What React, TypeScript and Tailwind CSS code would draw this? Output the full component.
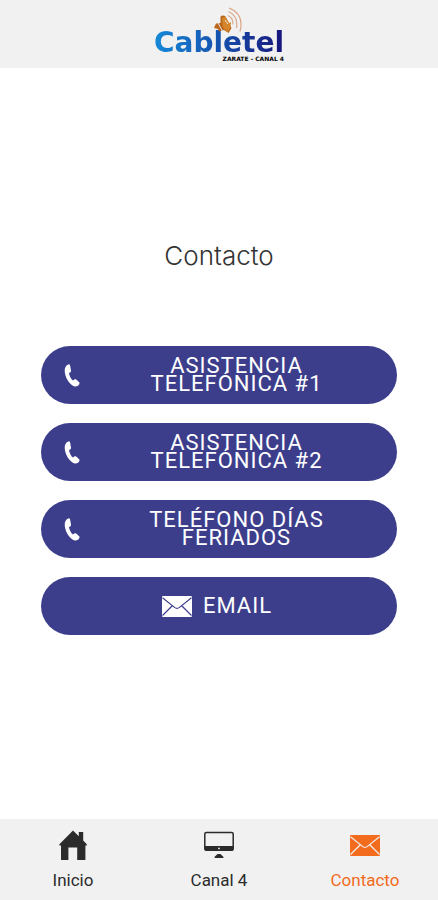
import type { ReactNode } from "react";

const actions = [
    { id: "asistencia-1", lines: ["ASISTENCIA", "TELEFÓNICA #1"] },
    { id: "asistencia-2", lines: ["ASISTENCIA", "TELEFÓNICA #2"] },
    { id: "feriados", lines: ["TELÉFONO DÍAS", "FERIADOS"] },
];

function PhoneIcon() {
    return (
        <svg viewBox="0 0 16 23" className="h-[23px] w-4 shrink-0" fill="currentColor" aria-hidden="true">
            <path d="M4.4 0.4 C2 1.2 0.7 3.4 0.7 6.4 C0.7 12.6 5 20.2 10 22.2 C12.4 23 15 21.6 15.5 19.4 C15.6 18.8 15.4 18.4 14.9 18 L12.2 15.6 C11.6 15.1 10.9 15.1 10.3 15.6 L9 16.6 C7 15 5.4 12 5 9 L6.2 8.4 C6.9 8 7.2 7.4 7 6.6 L6.1 1.4 C5.9 0.5 5.3 0.1 4.4 0.4 Z" />
        </svg>
    );
}

function MailIcon({ line }: { line: string }) {
    return (
        <svg viewBox="0 0 30 21" className="h-[21px] w-[30px] shrink-0" aria-hidden="true">
            <rect width="30" height="21" rx="1" fill="currentColor" />
            <path
                d="M0.5 1.8 L12.5 11.4 Q15 13.4 17.5 11.4 L29.5 1.8 M0.5 19.5 L10.3 9.8 M29.5 19.5 L19.7 9.8"
                fill="none"
                stroke={line}
                strokeWidth="1.2"
            />
        </svg>
    );
}

function HomeIcon() {
    return (
        <svg viewBox="0 0 28 30" className="h-[30px] w-7" fill="currentColor" aria-hidden="true">
            <path d="M14 0.6 L19.8 6.2 V2 H24.2 V10.6 L27.8 14.2 V15.6 H26.4 V30 H18.2 V17.4 H9.4 V30 H2 V15.6 H0.4 V14.2 Z" />
        </svg>
    );
}

function MonitorIcon() {
    return (
        <svg viewBox="0 0 30 30" className="size-[30px]" aria-hidden="true">
            <rect x="0.8" y="2.4" width="28.4" height="17.6" rx="1.6" fill="none" stroke="currentColor" strokeWidth="1.5" />
            <path d="M0.5 16 H29.5 V19.4 Q29.5 21 27.8 21 H2.2 Q0.5 21 0.5 19.4 Z" fill="currentColor" />
            <circle cx="15" cy="18.4" r="0.9" fill="#f1f1f1" />
            <path d="M13.6 24 H16.4 L19.4 26.8 V28 H10.6 V26.8 Z" fill="currentColor" />
        </svg>
    );
}

function DishIcon() {
    return (
        <svg viewBox="0 0 30 28" className="h-7 w-[30px]" aria-hidden="true">
            <path d="M7.5 9.5 Q10 7.5 12.5 9.5 L18.5 21 L15.5 26 L11 23 L6 24.5 L5 22 L1 21 L3 16.5 L7.5 16 Z" fill="#b8671c" />
            <path d="M9 11 L12.5 10 L16 16 L18 15 L17.5 20.5 L14.5 25 L10 20.5 Z" fill="#d5852a" />
            <path d="M4.5 15 L9.5 24 M12 13 L15 17" stroke="#f1f1f1" strokeWidth="0.9" />
            <path
                d="M15 8.5 Q20.5 11 19.8 17.5 M15.5 4.5 Q25.5 9 23.5 21 M16 1 Q31.5 7 27 24.5"
                fill="none"
                stroke="#dba988"
                strokeWidth="1.2"
            />
        </svg>
    );
}

function Logo() {
    return (
        <a href="#inicio" className="relative flex flex-col items-end font-['DejaVu_Sans',sans-serif] font-bold">
            <span className="bg-linear-to-r from-[#1589d8] via-[#1552ae] to-[#17127c] bg-clip-text pt-[2px] text-[28px] leading-[26px] text-transparent">
                Cabletel
            </span>
            <span className="text-[6px] leading-[6px] text-black">ZARATE - CANAL 4</span>
            <span className="absolute -top-[21px] left-[59px]">
                <DishIcon />
            </span>
        </a>
    );
}

function NavItem({ href, label, active, children }: { href: string; label: string; active?: boolean; children: ReactNode }) {
    return (
        <a
            href={href}
            aria-current={active ? "page" : undefined}
            className={`flex flex-1 flex-col items-center gap-2 ${active ? "text-[#f36b1c]" : "text-[#2b2b2b]"}`}
        >
            <span className="flex h-[30px] items-center">{children}</span>
            <span className="text-[17px] leading-6">{label}</span>
        </a>
    );
}

export default function App() {
    return (
        <div className="flex min-h-screen flex-col bg-white font-[Roboto,sans-serif]">
            <header className="flex items-start justify-center bg-[#f1f1f1] pt-[28px] pb-[6px]">
                <Logo />
            </header>

            <main className="flex flex-1 flex-col px-[41px] pt-[172px]">
                <h1 className="text-center font-[Inter,sans-serif] text-[26px] leading-8 font-light text-[#333333]">
                    Contacto
                </h1>

                <div className="mt-[74px] flex flex-col gap-[19px]">
                    {actions.map((action) => (
                        <button
                            key={action.id}
                            type="button"
                            className="flex h-[58px] items-center rounded-full bg-[#3c3e8c] pr-1 pl-[23px] text-[22px] leading-[18px] tracking-[1px] text-white"
                        >
                            <PhoneIcon />
                            <span className="flex-1">
                                {action.lines[0]}
                                <br />
                                {action.lines[1]}
                            </span>
                        </button>
                    ))}
                    <button
                        type="button"
                        className="flex h-[58px] items-center justify-center gap-[11px] rounded-full bg-[#3c3e8c] pr-1 text-[22px] leading-[18px] tracking-[1px] text-white"
                    >
                        <MailIcon line="#3c3e8c" />
                        EMAIL
                    </button>
                </div>
            </main>

            <nav className="flex bg-[#f1f1f1] pt-[11px] pb-2">
                <NavItem href="#inicio" label="Inicio">
                    <HomeIcon />
                </NavItem>
                <NavItem href="#canal-4" label="Canal 4">
                    <MonitorIcon />
                </NavItem>
                <NavItem href="#contacto" label="Contacto" active>
                    <MailIcon line="#f1f1f1" />
                </NavItem>
            </nav>
        </div>
    );
}
